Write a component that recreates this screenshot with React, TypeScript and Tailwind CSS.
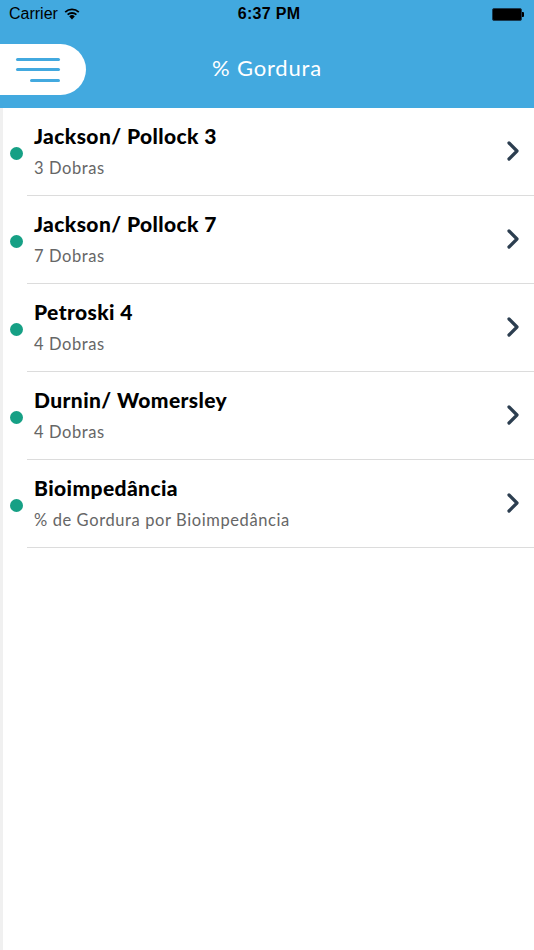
import React from "react";

const items = [
  { title: "Jackson/ Pollock 3", sub: "3 Dobras" },
  { title: "Jackson/ Pollock 7", sub: "7 Dobras" },
  { title: "Petroski 4", sub: "4 Dobras" },
  { title: "Durnin/ Womersley", sub: "4 Dobras" },
  { title: "Bioimpedância", sub: "% de Gordura por Bioimpedância" },
];

export default function App() {
  return (
    <div
      className="w-[534px] h-[950px] bg-white flex flex-col overflow-hidden"
      style={{ fontFamily: "Lato, 'Noto Sans', sans-serif" }}
    >
      <div className="bg-[#42a9df] h-[108px] flex flex-col shrink-0">
        <div className="h-[28px] flex items-center justify-between px-[9px] text-black relative">
          <div className="flex items-center gap-[6px] text-[16px]" style={{ fontFamily: "'Liberation Sans', sans-serif" }}>
            <span>Carrier</span>
            <svg width="16" height="12" viewBox="0 0 16 12">
              <path d="M8 11.5 L5.2 8.4 A4 4 0 0 1 10.8 8.4 Z" fill="#000" />
              <path d="M3.6 6.7 A6.5 6.5 0 0 1 12.4 6.7" stroke="#000" strokeWidth="1.8" fill="none" />
              <path d="M1.2 4.1 A10 10 0 0 1 14.8 4.1" stroke="#000" strokeWidth="1.8" fill="none" />
            </svg>
          </div>
          <div
            className="absolute left-1/2 -translate-x-1/2 ml-[2px] text-[16px] font-bold tracking-[0.3px]"
            style={{ fontFamily: "'Liberation Sans', sans-serif" }}
          >
            6:37 PM
          </div>
          <div className="flex items-center mr-[1px]">
            <div className="w-[30px] h-[13px] bg-black rounded-[2px] border border-[#1a3a50]" />
            <div className="w-[2px] h-[5px] bg-black rounded-r-[1px]" />
          </div>
        </div>
        <div className="flex-1 flex items-center relative">
          <div className="w-[86px] h-[51px] bg-white rounded-r-full flex flex-col items-end justify-center gap-[7.5px] pr-[26px] mt-[3px]">
            <div className="w-[44px] h-[3px] bg-[#42a9df] rounded-full" />
            <div className="w-[44px] h-[3px] bg-[#42a9df] rounded-full" />
            <div className="w-[30px] h-[3px] bg-[#42a9df] rounded-full" />
          </div>
          <div className="absolute left-1/2 -translate-x-1/2 top-[25px] text-white text-[22px] tracking-[0.8px] leading-[30px]">
            % Gordura
          </div>
        </div>
      </div>
      <div className="flex-1 border-l-[3px] border-[#f0f0f0]">
        {items.map((it) => (
          <div key={it.title} className="flex items-center h-[88px] pl-[7px]">
            <div className="w-[13px] h-[13px] rounded-full bg-[#16a085] shrink-0 mt-[2px]" />
            <div className="flex-1 h-full border-b border-[#dcdcdc] ml-[4px] flex items-center pl-[7px] pr-[14px]">
              <div className="flex-1 flex flex-col">
                <div className="text-[21px] font-black text-black leading-[26px] tracking-[0.4px] mt-[-2px]">{it.title}</div>
                <div className="text-[16.5px] text-[#666] leading-[22px] mt-[8px] tracking-[0.6px]">{it.sub}</div>
              </div>
              <svg width="14" height="22" viewBox="0 0 14 22" className="mt-[-2px]">
                <path d="M3 3 L11 11 L3 19" stroke="#2c3e50" strokeWidth="3.2" fill="none" strokeLinecap="round" strokeLinejoin="round" />
              </svg>
            </div>
          </div>
        ))}
      </div>
    </div>
  );
}
